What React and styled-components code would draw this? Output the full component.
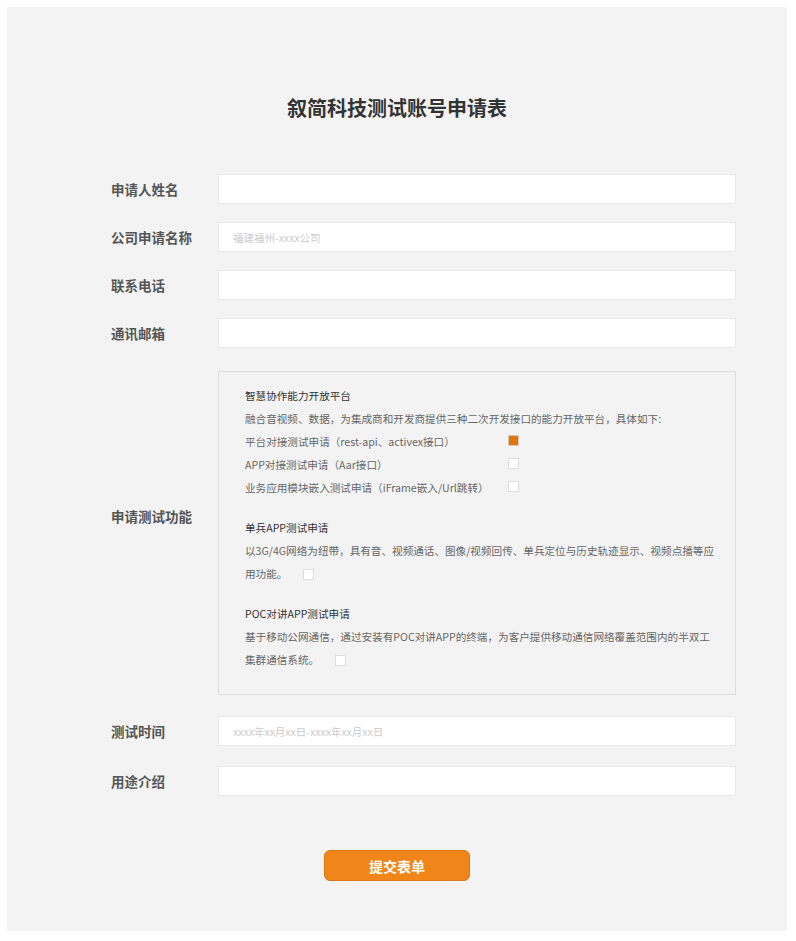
import styled, { createGlobalStyle } from "styled-components";

const GlobalStyle = createGlobalStyle`
  body {
    margin: 0;
    background: #fff;
    font-family: "Noto Sans CJK SC", "Noto Sans", sans-serif;
  }
`;

const Page = styled.div`
  margin: 7px 9px 10px 7px;
  width: 780px;
  height: 924px;
  background: #f3f3f3;
  box-sizing: border-box;
  padding-top: 87px;
`;

const Title = styled.h1`
  margin: 0;
  text-align: center;
  font-size: 20px;
  line-height: 28px;
  font-weight: bold;
  color: #333;
`;

const Form = styled.form`
  margin-top: 52px;
`;

const Fields = styled.div`
  display: flex;
  flex-direction: column;
  gap: 18px;
  padding: 0 51px 0 104px;
`;

const Row = styled.div`
  display: flex;
  align-items: center;
  margin-top: ${(p) => p.$offset || 0}px;
`;

const Label = styled.label`
  width: 107px;
  flex-shrink: 0;
  font-size: 13.5px;
  font-weight: bold;
  color: #555;
  margin-bottom: ${(p) => p.$lift || 0}px;
`;

const Input = styled.input`
  flex: 1;
  height: 30px;
  box-sizing: border-box;
  border: 1px solid #e8e8e8;
  background: #fff;
  padding: 0 14px;
  font-family: inherit;
  font-size: 10.5px;
  color: #333;
  outline: none;
  &::placeholder {
    color: #ccc;
  }
`;

const Box = styled.div`
  flex: 1;
  border: 1px solid #ddd;
  box-sizing: border-box;
  padding: 12px 12px 23px 26px;
  font-size: 10.6px;
  line-height: 23px;
  color: #666;
`;

const Section = styled.div`
  width: 472px;
  & + & {
    margin-top: 17px;
  }
`;

const Heading = styled.div`
  color: #333;
`;

const Option = styled.div`
  display: flex;
  align-items: center;
`;

const OptionText = styled.span`
  width: 263px;
  flex-shrink: 0;
`;

const Check = styled.span`
  display: inline-block;
  width: 9px;
  height: 9px;
  border: 1px solid ${(p) => (p.$on ? "#d8c9bb" : "#ddd")};
  background: ${(p) => (p.$on ? "#e27608" : "#fff")};
  vertical-align: middle;
  margin-left: ${(p) => p.$gap || 0}px;
  position: relative;
  top: -1px;
`;

const Actions = styled.div`
  display: flex;
  justify-content: center;
  padding-top: 54px;
`;

const Submit = styled.button`
  width: 146px;
  height: 31px;
  border: 1px solid #d9771a;
  border-radius: 6px;
  background: #f08519;
  color: #fff;
  font-family: inherit;
  font-size: 14px;
  font-weight: bold;
  cursor: pointer;
`;

export default function App() {
  return (
    <>
      <GlobalStyle />
      <Page>
        <Title>叙简科技测试账号申请表</Title>
        <Form onSubmit={(e) => e.preventDefault()}>
          <Fields>
            <Row>
              <Label>申请人姓名</Label>
              <Input />
            </Row>
            <Row>
              <Label>公司申请名称</Label>
              <Input placeholder="福建福州-xxxx公司" />
            </Row>
            <Row>
              <Label>联系电话</Label>
              <Input />
            </Row>
            <Row>
              <Label>通讯邮箱</Label>
              <Input />
            </Row>
            <Row $offset={5}>
              <Label $lift={35}>申请测试功能</Label>
              <Box>
                <Section>
                  <Heading>智慧协作能力开放平台</Heading>
                  <div>融合音视频、数据，为集成商和开发商提供三种二次开发接口的能力开放平台，具体如下:</div>
                  <Option>
                    <OptionText>平台对接测试申请（rest-api、activex接口）</OptionText>
                    <Check $on />
                  </Option>
                  <Option>
                    <OptionText>APP对接测试申请（Aar接口）</OptionText>
                    <Check />
                  </Option>
                  <Option>
                    <OptionText>业务应用模块嵌入测试申请（iFrame嵌入/Url跳转）</OptionText>
                    <Check />
                  </Option>
                </Section>
                <Section>
                  <Heading>单兵APP测试申请</Heading>
                  <div>
                    以3G/4G网络为纽带，具有音、视频通话、图像/视频回传、单兵定位与历史轨迹显示、视频点播等应用功能。
                    <Check $gap={16} />
                  </div>
                </Section>
                <Section>
                  <Heading>POC对讲APP测试申请</Heading>
                  <div>
                    基于移动公网通信，通过安装有POC对讲APP的终端，为客户提供移动通信网络覆盖范围内的半双工集群通信系统。
                    <Check $gap={16} />
                  </div>
                </Section>
              </Box>
            </Row>
            <Row $offset={3}>
              <Label>测试时间</Label>
              <Input placeholder="xxxx年xx月xx日-xxxx年xx月xx日" />
            </Row>
            <Row $offset={2}>
              <Label>用途介绍</Label>
              <Input />
            </Row>
          </Fields>
          <Actions>
            <Submit type="submit">提交表单</Submit>
          </Actions>
        </Form>
      </Page>
    </>
  );
}
